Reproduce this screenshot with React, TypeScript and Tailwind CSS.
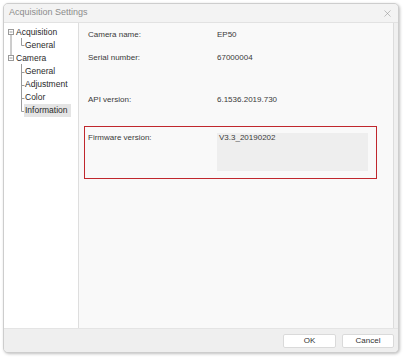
import { X } from "lucide-react"

const info = [
  { label: "Camera name:", value: "EP50", gap: "mt-[6px]" },
  { label: "Serial number:", value: "67000004", gap: "mt-[11px]" },
  { label: "API version:", value: "6.1536.2019.730", gap: "mt-[30px]" },
]

const tree = [
  { text: "Acquisition", indent: "pl-[12px]" },
  { text: "General", indent: "pl-[21px]" },
  { text: "Camera", indent: "pl-[12px]" },
  { text: "General", indent: "pl-[21px]" },
  { text: "Adjustment", indent: "pl-[21px]" },
  { text: "Color", indent: "pl-[21px]" },
  { text: "Information", indent: "pl-[21px]", active: true },
]

// connector lines of the settings tree
function TreeLines() {
  return (
    <svg className="absolute inset-0 pointer-events-none" width="74" height="120" stroke="#9a9a9a" fill="none" strokeWidth="1">
      <rect x="4.5" y="6.5" width="5" height="5" fill="#fff" />
      <path d="M5.5 9h3" />
      <path d="M7 11.5v21" />
      <path d="M17.5 15v7.5h3" />
      <rect x="4.5" y="32.5" width="5" height="5" fill="#fff" />
      <path d="M5.5 35h3" />
      <path d="M17.5 41v47.5h3M17.5 49.5h3M17.5 62.5h3M17.5 75.5h3" />
    </svg>
  )
}

export default function App() {
  return (
    <div className="w-[403px] h-[357px] bg-white pt-[3px] pl-[3px] font-['Liberation_Sans',Arial,sans-serif]">
      <div className="w-[396px] h-[350px] flex flex-col bg-[#f0f0f0] border border-[#cdcdcd] rounded-[5px] shadow-[1px_1px_3px_rgba(0,0,0,0.25)] overflow-hidden">
        {/* Title bar */}
        <div className="h-[18px] flex items-center justify-between pl-[5px] pr-[5px] bg-[#f3f3f3] text-[#8c8c8c] text-[9px]">
          <span>Acquisition Settings</span>
          <X size={11} strokeWidth={1.1} className="text-[#8a8a8a]" />
        </div>

        {/* Body */}
        <div className="flex-1 flex border-t border-[#e2e2e2] pr-[4px]">
          <div className="relative w-[75px] bg-white border-r border-[#dedede] pt-[3px] text-[8.5px] text-[#2a2a2a]">
            <TreeLines />
            {tree.map((t, i) => (
              <div key={i} className={`relative h-[13px] leading-[13px] ${t.indent}`}>
                <span className={t.active ? "inline-block w-[47px] -ml-[1px] pl-[1px] bg-[#e4e4e4]" : ""}>{t.text}</span>
              </div>
            ))}
          </div>

          <div className="flex-1 bg-[#f9f9f9] border-r border-[#dcdcdc] text-[8px] text-[#3a3a3a]">
            {info.map((r) => (
              <div key={r.label} className={`flex pl-[9px] leading-[12px] ${r.gap}`}>
                <span className="w-[129px]">{r.label}</span>
                <span>{r.value}</span>
              </div>
            ))}

            <div className="mt-[20px] ml-[5px] w-[293px] h-[53px] border border-[#c0272d] flex pl-[3px] pt-[5px]">
              <span className="w-[129px] leading-[12px]">Firmware version:</span>
              <div className="mt-[1px] w-[151px] h-[38px] bg-[#eeeeee] px-[2px] leading-[10px]">V3.3_20190202</div>
            </div>
          </div>
        </div>

        {/* Footer */}
        <div className="h-[24px] flex items-center justify-end gap-[6px] pr-[4px] border-t border-[#e4e4e4] bg-[#efefef]">
          <button className="w-[53px] h-[14px] bg-white border border-[#dadada] rounded-[2px] text-[8px] text-[#333] leading-none">OK</button>
          <button className="w-[52px] h-[14px] bg-white border border-[#dadada] rounded-[2px] text-[8px] text-[#333] leading-none">Cancel</button>
        </div>
      </div>
    </div>
  )
}
